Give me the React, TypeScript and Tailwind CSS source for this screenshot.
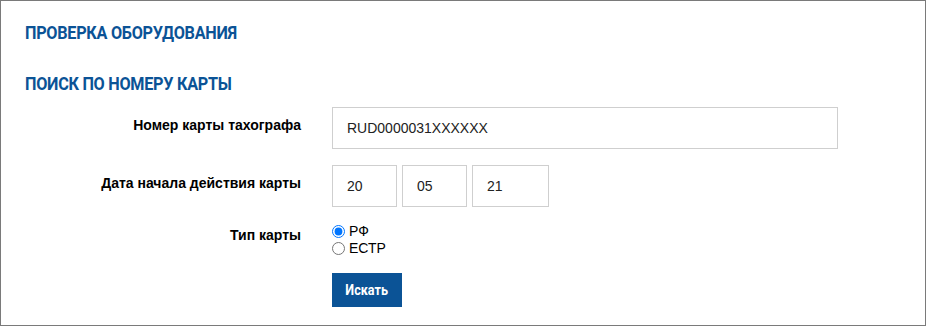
export default function App() {
  const labelFont = { fontFamily: '"Liberation Sans", Arial, sans-serif' };
  return (
    <div className="w-[926px] h-[326px] bg-white border border-[#7a7a7a] box-border" style={labelFont}>
      <div className="pl-6 pt-[20px]">
        <h2
          className="origin-left scale-x-[0.9] text-[18px] leading-[24px] font-bold text-[#0b5396] tracking-[-0.3px]"
          style={{ fontFamily: 'Roboto, sans-serif' }}
        >
          ПРОВЕРКА ОБОРУДОВАНИЯ
        </h2>
        <h2
          className="mt-[27px] origin-left scale-x-[0.9] text-[18px] leading-[24px] font-bold text-[#0b5396] tracking-[-0.3px]"
          style={{ fontFamily: 'Roboto, sans-serif' }}
        >
          ПОИСК ПО НОМЕРУ КАРТЫ
        </h2>
      </div>

      <div className="mt-[11px] grid grid-cols-[300px_1fr] gap-x-[31px] gap-y-[16px] text-[14px] text-black">
        <label className="text-right font-bold pt-[8px]">Номер карты тахографа</label>
        <input
          readOnly
          value="RUD0000031XXXXXX"
          className="w-[506px] h-[42px] border border-[#cfcfcf] px-[14px] text-[14px] text-[#222] outline-none"
        />

        <label className="text-right font-bold pt-[8px]">Дата начала действия карты</label>
        <div className="flex gap-[5px]">
          <input readOnly value="20" className="w-[65px] h-[42px] border border-[#cfcfcf] px-[14px] text-[#222] outline-none" />
          <input readOnly value="05" className="w-[65px] h-[42px] border border-[#cfcfcf] px-[14px] text-[#222] outline-none" />
          <input readOnly value="21" className="w-[77px] h-[42px] border border-[#cfcfcf] px-[14px] text-[#222] outline-none" />
        </div>

        <label className="text-right font-bold pt-[2px]">Тип карты</label>
        <div className="flex flex-col">
          <label className="flex items-center gap-[4px] leading-[17px]">
            <input type="radio" name="type" defaultChecked className="m-0 w-[13px] h-[13px]" />
            РФ
          </label>
          <label className="flex items-center gap-[4px] leading-[17px]">
            <input type="radio" name="type" className="m-0 w-[13px] h-[13px]" />
            ЕСТР
          </label>
          <button
            className="mt-[16px] w-[70px] h-[34px] bg-[#0b5396] text-white text-[14px] font-bold"
            style={{ fontFamily: 'Roboto, sans-serif' }}
          >
            <span className="inline-block scale-x-[0.9]">Искать</span>
          </button>
        </div>
      </div>
    </div>
  );
}
